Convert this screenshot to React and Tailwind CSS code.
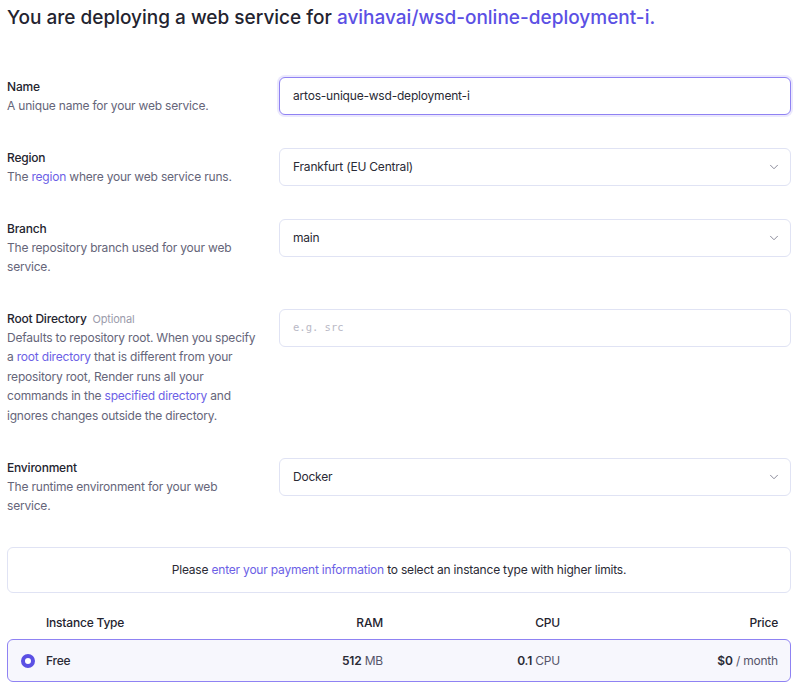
import { ChevronDown } from "lucide-react";

function Field({ label, optional, children, control, lead = "leading-[19px]" }) {
  return (
    <div className="flex items-start">
      <div className="w-[272px] shrink-0 pr-[20px] text-[12px] leading-[19px] tracking-[-0.2px]">
        <div className="h-[19px] font-medium text-[#24242f]">
          {label}
          {optional && (
            <span className="ml-[6px] text-[11px] font-normal leading-[0] text-[#9b9bab]">{optional}</span>
          )}
        </div>
        <div className={`text-[#656579] ${lead}`}>{children}</div>
      </div>
      <div className="flex-1">{control}</div>
    </div>
  );
}

function Select({ value }) {
  return (
    <div className="flex h-[38px] items-center justify-between rounded-md border border-[#e0e3f4] bg-white pl-[13px] pr-[9px] text-[12px] tracking-[-0.2px] text-[#2a2a35]">
      <span>{value}</span>
      <ChevronDown size={14} strokeWidth={1.5} className="text-[#7a7a8c]" />
    </div>
  );
}

const Link = ({ children }) => <span className="text-[#6c5fe6]">{children}</span>;

export default function App() {
  return (
    <div className="min-h-[688px] bg-white pl-[7px] pr-[9px] pt-[5px] font-['Inter',sans-serif]">
      <h1 className="text-[19px] font-medium leading-[26px] text-[#23232f]">
        You are deploying a web service for{" "}
        <span className="text-[#5b50e4]">avihavai/wsd-online-deployment-i.</span>
      </h1>

      <div className="mt-[46px] flex flex-col gap-[33px]">
        <Field
          label="Name"
          control={
            <div className="flex h-[38px] items-center rounded-md border border-[#8f82f3] bg-white px-[13px] text-[12px] tracking-[-0.2px] text-[#2a2a35] shadow-[0_0_0_2px_rgba(143,130,243,0.18)]">
              artos-unique-wsd-deployment-i
            </div>
          }
        >
          A unique name for your web service.
        </Field>

        <Field label="Region" control={<Select value="Frankfurt (EU Central)" />}>
          The <Link>region</Link> where your web service runs.
        </Field>

        <Field label="Branch" control={<Select value="main" />}>
          The repository branch used for your web
          <br />
          service.
        </Field>

        <Field
          label="Root Directory"
          optional="Optional"
          lead="leading-[19.4px]"
          control={
            <div className="flex h-[38px] items-center rounded-md border border-[#e0e3f4] bg-white px-[13px] font-['DejaVu_Sans_Mono',monospace] text-[10.5px] text-[#b9b9c6]">
              e.g. src
            </div>
          }
        >
          <span className="whitespace-nowrap">Defaults to repository root. When you specify</span>
          <br />a <Link>root directory</Link> that is different from your
          <br />
          repository root, Render runs all your
          <br />
          commands in the <Link>specified directory</Link> and
          <br />
          ignores changes outside the directory.
        </Field>

        <Field label="Environment" control={<Select value="Docker" />}>
          The runtime environment for your web
          <br />
          service.
        </Field>

        <div className="-mt-px flex h-[46px] items-center justify-center rounded-md border border-[#e0e3f4] text-[12px] tracking-[-0.2px] text-[#2a2a35]">
          <span>
            Please <Link>enter your payment information</Link> to select an instance type with
            higher limits.
          </span>
        </div>
      </div>

      <div className="mt-[20px] flex h-[20px] items-center border border-transparent pr-[12px] text-[12px] font-medium tracking-[-0.2px] text-[#24242f]">
        <div className="w-[38px] shrink-0" />
        <div className="flex-1">Instance Type</div>
        <div className="w-[120px] text-right">RAM</div>
        <div className="w-[177px] text-right">CPU</div>
        <div className="w-[218px] text-right">Price</div>
      </div>

      <div className="mt-[6px] flex h-[43px] items-center rounded-md border border-[#8f82f3] bg-[#f7f7fd] pr-[12px] text-[12px] tracking-[-0.2px] text-[#2a2a35]">
        <div className="flex w-[38px] shrink-0 items-center pl-[13px]">
          <span className="block h-[14px] w-[14px] rounded-full border-[4px] border-[#5b50e4] bg-white" />
        </div>
        <div className="flex-1 font-medium">Free</div>
        <div className="w-[120px] text-right">
          <span className="font-semibold">512</span> <span className="text-[#55556a]">MB</span>
        </div>
        <div className="w-[177px] text-right">
          <span className="font-semibold">0.1</span> <span className="text-[#55556a]">CPU</span>
        </div>
        <div className="w-[218px] text-right">
          <span className="font-semibold">$0</span> <span className="text-[#55556a]">/ month</span>
        </div>
      </div>
    </div>
  );
}
